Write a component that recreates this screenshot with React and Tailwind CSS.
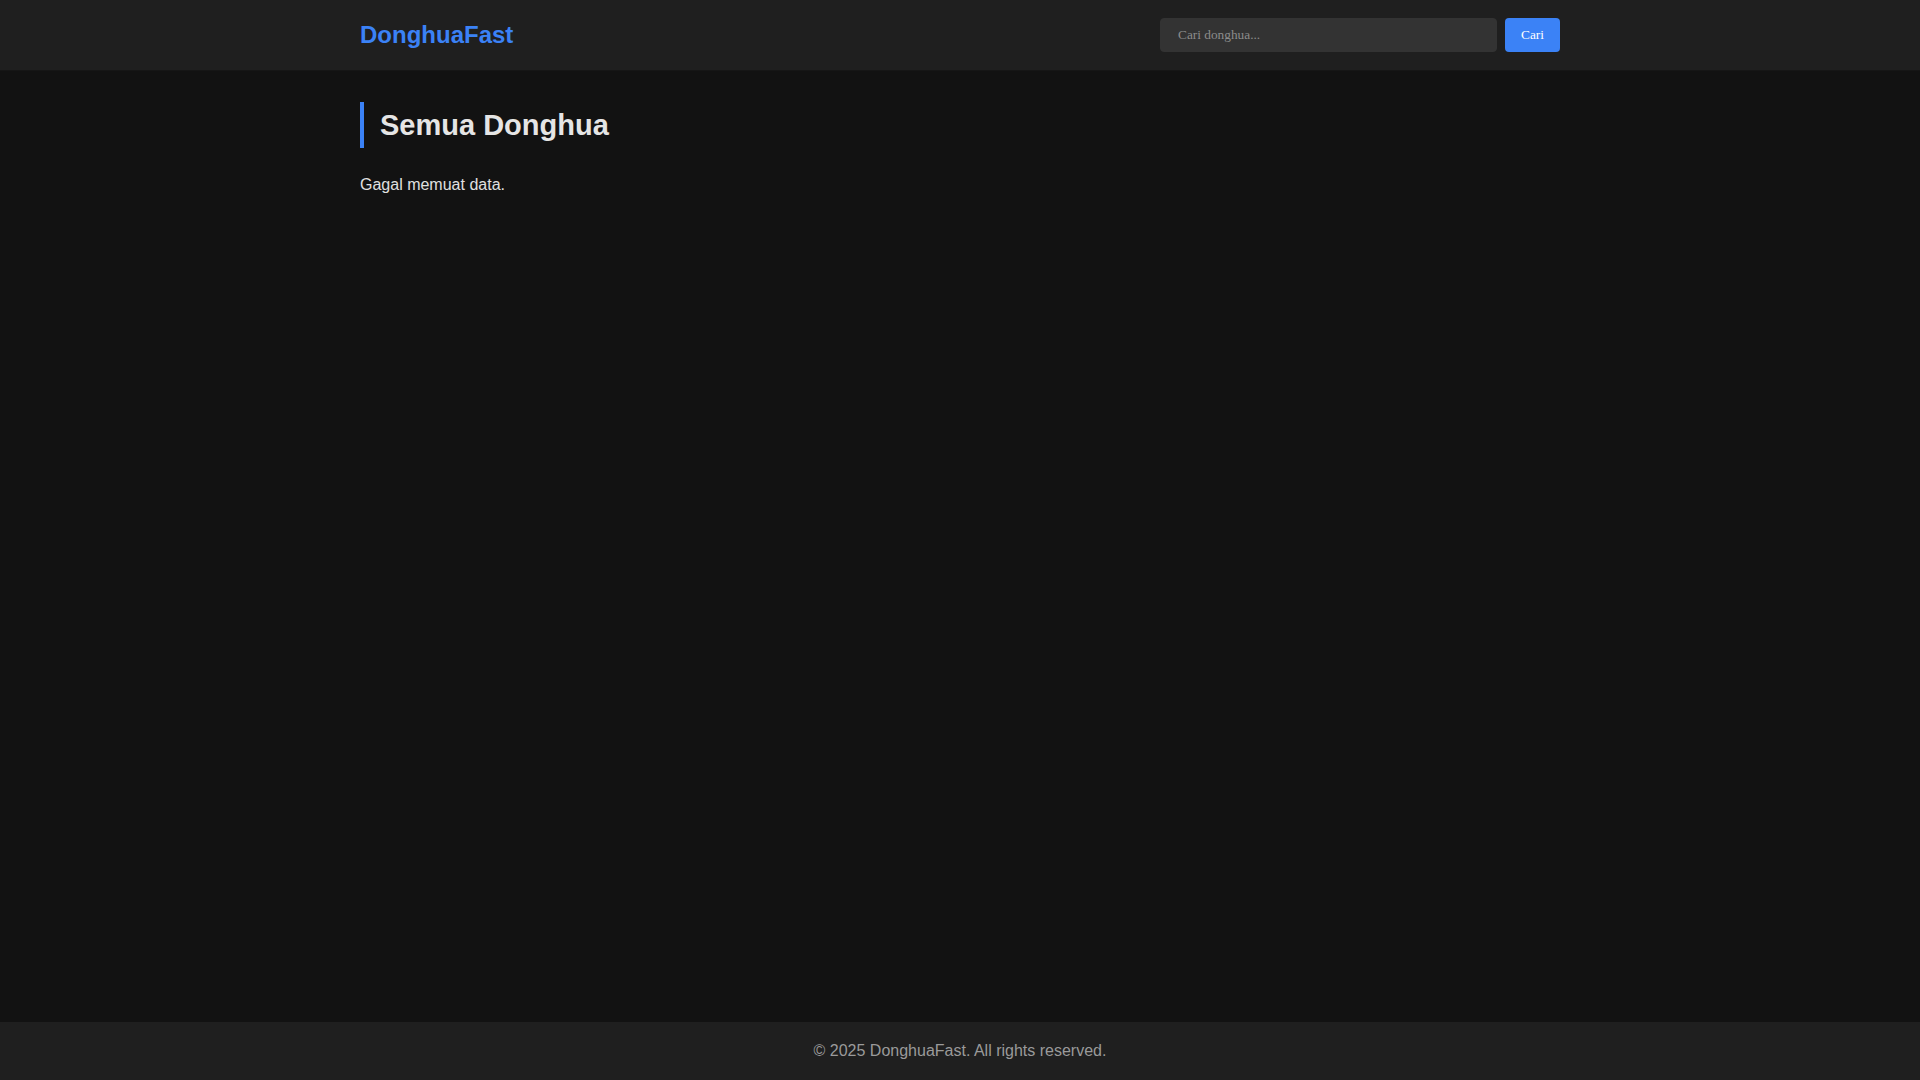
import React, { useState } from 'react'

const App = () => {
  const [query, setQuery] = useState('')

  return (
    <div className="min-h-screen flex flex-col bg-[#121212] text-[#e0e0e0] leading-[1.6] font-['Liberation_Sans',Arial,sans-serif]">
      {/* Header */}
      <header className="bg-[#1f1f1f] border-b border-[#161616]">
        <div className="w-[1200px] mx-auto h-[70px] flex items-center justify-between">
          <a href="#" className="text-[24px] font-bold text-[#3b82f6]">DonghuaFast</a>
          <form className="w-[400px] flex gap-2" onSubmit={(e) => e.preventDefault()}>
            <input
              value={query}
              onChange={(e) => setQuery(e.target.value)}
              placeholder="Cari donghua..."
              className="flex-1 h-[34px] pl-[17px] pr-4 rounded border border-[#333] bg-[#333] text-[#e0e0e0] placeholder:text-[#8c8c8c] text-[13.33px] font-['Liberation_Serif',serif] outline-none"
            />
            <button className="h-[34px] w-[55px] rounded bg-[#3b82f6] text-white text-[13.33px] font-['Liberation_Serif',serif]">
              Cari
            </button>
          </form>
        </div>
      </header>

      {/* Main */}
      <main className="flex-1">
        <div className="w-[1200px] mx-auto pt-[31px]">
          <h1 className="border-l-4 border-[#3b82f6] pl-4 text-[29px] font-bold leading-[46px] text-[#e5e5e5]">
            Semua Donghua
          </h1>
          <p className="mt-6 text-[16px]">Gagal memuat data.</p>
        </div>
      </main>

      {/* Footer */}
      <footer className="bg-[#1f1f1f] py-4 text-center text-[16px] text-[#9a9a9a]">
        © 2025 DonghuaFast. All rights reserved.
      </footer>
    </div>
  )
}

export default App
